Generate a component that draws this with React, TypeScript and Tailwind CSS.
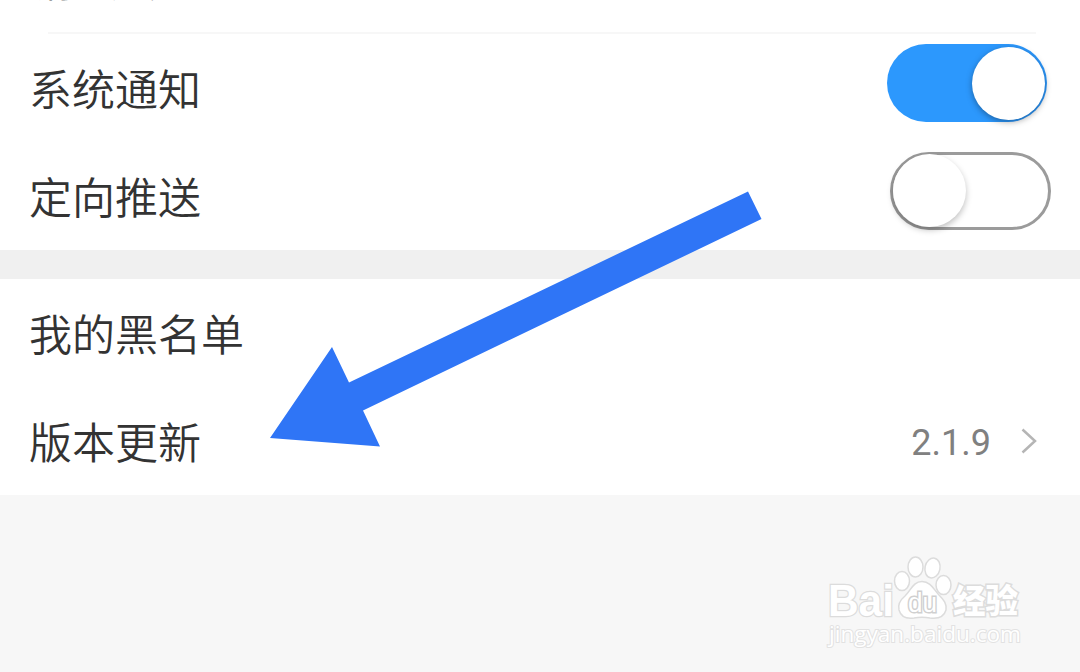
import React from 'react';

interface RowProps {
  label: string;
  children?: React.ReactNode;
}

const Row = ({ label, children }: RowProps) => (
  <div className="flex h-[108px] items-center justify-between pl-[29px]">
    <span className="mb-[2px] whitespace-nowrap text-[43px] font-[350] leading-[60px] text-[#333333]">{label}</span>
    {children}
  </div>
);

const Toggle = ({ on = false }: { on?: boolean }) => {
  if (on) {
    return (
      <button
        role="switch"
        aria-checked="true"
        className="mr-[33px] mb-[10px] flex h-[78px] w-[160px] items-center justify-end rounded-full bg-[#2c98fd] pr-[2px]"
      >
        <span className="size-[73px] rounded-full bg-white shadow-[0_2px_6px_rgba(0,0,0,0.35)]" />
      </button>
    );
  }
  return (
    <button
      role="switch"
      aria-checked="false"
      className="mr-[29px] mb-[11px] flex h-[78px] w-[161px] items-center rounded-full border-[3px] border-[#9b9b9b] bg-white"
    >
      <span className="size-[73px] rounded-full bg-white shadow-[0_3px_6px_rgba(0,0,0,0.25)]" />
    </button>
  );
};

const Watermark = () => (
  <svg className="absolute left-[820px] top-[550px]" width="220" height="110" viewBox="820 550 220 110">
    <g fill="#ffffff" stroke="#dcdcdc" strokeWidth="1.5">
      <text x="828" y="616" fontSize="44" fontWeight="700" textLength="66" lengthAdjust="spacingAndGlyphs" strokeWidth="2.5" paintOrder="stroke" className="font-['Liberation_Sans',sans-serif]">Bai</text>
      <ellipse cx="902" cy="581" rx="7.5" ry="9.5" />
      <ellipse cx="915.5" cy="567" rx="7.5" ry="10" />
      <ellipse cx="932.5" cy="568" rx="7.5" ry="10" transform="rotate(12 932.5 568)" />
      <ellipse cx="943.5" cy="585" rx="7.5" ry="9.5" />
      <path d="M922 581.5c-9 0-11 9-17 14.500c-6 5-7 10-6 14c2 7 8 9 15 8c6-1 10-1 16 0c8 1 14-1 16-8c1-6-2-10-7-15c-5-5-8-13.500-17-13.500Z" />
      <text x="908" y="612" fontSize="27" textLength="29" lengthAdjust="spacingAndGlyphs" strokeWidth="3" stroke="#d0d0d0" paintOrder="stroke" className="font-['Liberation_Sans',sans-serif]">du</text>
      <text x="953" y="613" fontSize="33" fontWeight="900" textLength="65" lengthAdjust="spacingAndGlyphs" strokeWidth="3" paintOrder="stroke" className="font-['Noto_Sans_CJK_SC',sans-serif]">经验</text>
    </g>
    <text x="829" y="642" fontSize="22" fontWeight="500" textLength="192" lengthAdjust="spacingAndGlyphs" fill="#ffffff" stroke="#e2e2e2" strokeWidth="2" paintOrder="stroke" className="font-['Open_Sans',sans-serif]">jingyan.baidu.com</text>
  </svg>
);

const App = () => {
  return (
    <div className="relative h-[672px] w-[1080px] overflow-hidden bg-[#f7f7f7] font-['Noto_Sans_CJK_SC',sans-serif]">
      <section className="h-[250px] bg-white">
        <div className="flex h-8 items-start overflow-hidden pl-[35px]">
          <span className="-mt-[43px] whitespace-nowrap text-[38px] font-[350] leading-[48px] text-[#888888]">消息通知</span>
        </div>
        <div className="ml-12 mr-11 h-[2px] bg-[#f7f7f7]" />
        <Row label="系统通知">
          <Toggle on />
        </Row>
        <Row label="定向推送">
          <Toggle />
        </Row>
      </section>

      <div className="h-[29px] bg-[#f0f0f0]" />

      <section className="h-[216px] bg-white">
        <Row label="我的黑名单" />
        <Row label="版本更新">
          <div className="mr-[43px] flex items-center gap-[30px]">
            <span className="mt-[3px] font-[Roboto,sans-serif] text-[36px] leading-[40px] text-[#808080]">2.1.9</span>
            <svg width="16" height="26" viewBox="0 0 16 26" fill="none" stroke="#b5b5b5" strokeWidth="2.5">
              <path d="M1.500 1.500L14 13L1.500 24.500" />
            </svg>
          </div>
        </Row>
      </section>

      <svg className="absolute left-0 top-0" width="1080" height="672" viewBox="0 0 1080 672">
        <polygon points="270,438 332,347 349,382.500 748,191.500 761.500,219 363,410.500 380,446.500" fill="#2f75f6" />
      </svg>

      <Watermark />
    </div>
  );
};

export default App;
